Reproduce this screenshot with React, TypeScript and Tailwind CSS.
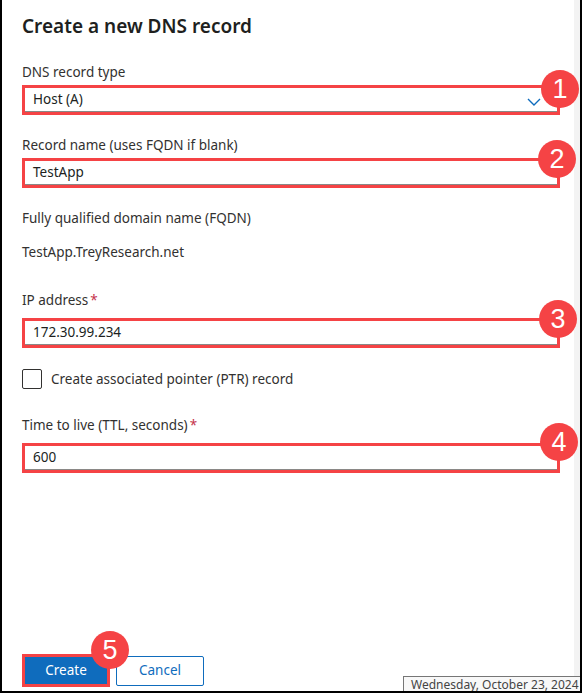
import React from "react";

function Badge({ n, className }: { n: string; className: string }) {
  return (
    <div
      className={
        "absolute w-[38px] h-[38px] rounded-full bg-[#f54345] text-white flex items-center justify-center text-[27px] leading-none font-[Arial,'Liberation_Sans',sans-serif] " +
        className
      }
    >
      {n}
    </div>
  );
}

function Field({ children, chevron }: { children: React.ReactNode; chevron?: boolean }) {
  return (
    <div className="w-[538px] h-[30px] border-[3px] border-[#f54345] flex">
      <div className="flex-1 flex items-center pl-[8px] pr-[10px] border-b border-[#8a8886] text-[13.5px] text-[#201f1e]">
        <span className="flex-1">{children}</span>
        {chevron && (
          <svg width="14" height="8" viewBox="0 0 14 8" className="mt-[4px] mr-[6px]">
            <path d="M1 1 L7 7 L13 1" fill="none" stroke="#0f6cbd" strokeWidth="1.4" />
          </svg>
        )}
      </div>
    </div>
  );
}

export default function App() {
  return (
    <div className="relative w-[582px] h-[693px] bg-white border-l-2 border-r-2 border-b-2 border-black font-['Noto_Sans',sans-serif] text-[#323130] overflow-hidden">
      <div className="absolute top-0 right-0 w-[6px] h-full bg-[#f3f3f3]" />
      <div className="pl-[20px]">
        <div className="pt-[12px] text-[19px] leading-[28px] font-semibold text-[#201f1e]">
          Create a new DNS record
        </div>
        <div className="mt-[22px] text-[13.5px] leading-[20px]">DNS record type</div>
        <div className="mt-[3px]">
          <Field chevron>Host (A)</Field>
        </div>
        <div className="mt-[20px] text-[13.5px] leading-[20px]">Record name (uses FQDN if blank)</div>
        <div className="mt-[3px]">
          <Field>TestApp</Field>
        </div>
        <div className="mt-[20px] text-[13.5px] leading-[20px]">Fully qualified domain name (FQDN)</div>
        <div className="mt-[14px] text-[13.5px] leading-[20px]">TestApp.TreyResearch.net</div>
        <div className="mt-[28px] text-[13.5px] leading-[20px]">
          IP address<span className="text-[#c4314b] ml-[2px]">*</span>
        </div>
        <div className="mt-[8px]">
          <Field>172.30.99.234</Field>
        </div>
        <div className="mt-[21px] flex items-center h-[20px]">
          <div className="w-[20px] h-[20px] border border-[#323130] rounded-[2px]" />
          <span className="ml-[9px] text-[13.5px] leading-[20px]">Create associated pointer (PTR) record</span>
        </div>
        <div className="mt-[26px] text-[13.5px] leading-[20px]">
          Time to live (TTL, seconds)<span className="text-[#c4314b] ml-[2px]">*</span>
        </div>
        <div className="mt-[8px]">
          <Field>600</Field>
        </div>
        <div className="mt-[181px] flex items-center gap-[6px]">
          <div className="w-[88px] h-[33px] border-[3px] border-[#f54345] bg-[#0f6cbd] text-white text-[13.5px] flex items-center justify-center">
            Create
          </div>
          <div className="w-[88px] h-[30px] border border-[#0f6cbd] rounded-[2px] bg-white text-[#0f6cbd] text-[13.5px] flex items-center justify-center">
            Cancel
          </div>
        </div>
      </div>
      <Badge n="1" className="left-[539px] top-[70px]" />
      <Badge n="2" className="left-[536px] top-[140px]" />
      <Badge n="3" className="left-[537px] top-[300px]" />
      <Badge n="4" className="left-[538px] top-[423px]" />
      <Badge n="5" className="left-[89px] top-[631px]" />
      <div className="absolute left-[401px] top-[676px] w-[180px] h-[20px] border border-[#767676] bg-[#f8f8f8] text-[12px] leading-[16px] pl-[7px] text-[#444] font-['Noto_Sans',sans-serif]">
        Wednesday, October 23, 2024
      </div>
    </div>
  );
}
